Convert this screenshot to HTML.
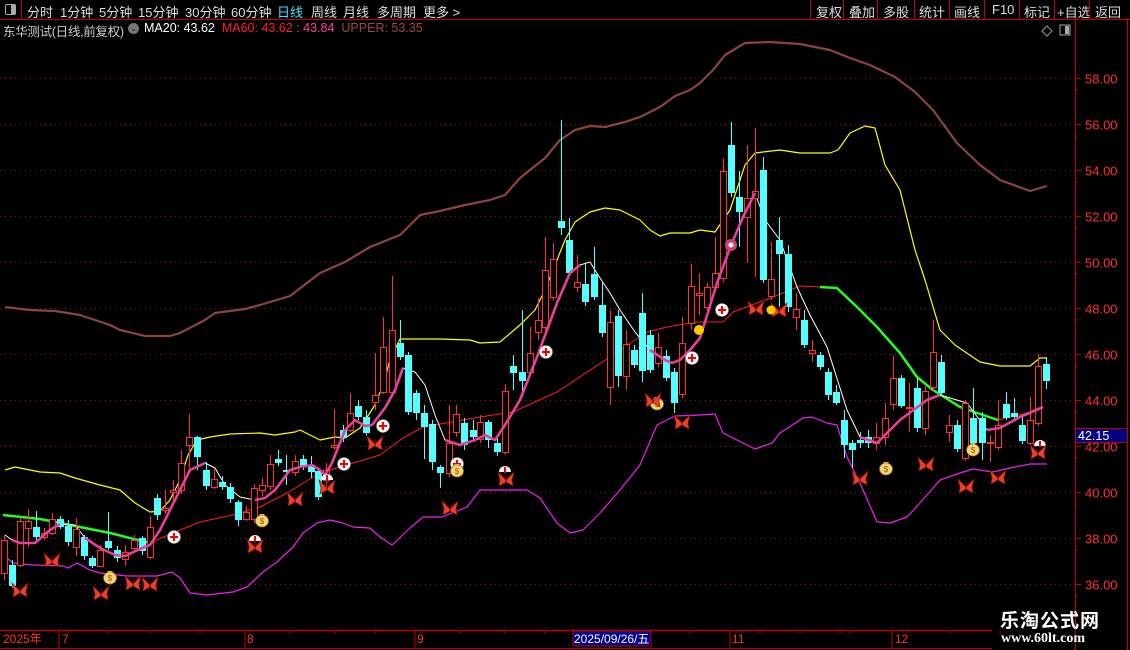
<!DOCTYPE html>
<html><head><meta charset="utf-8"><style>
html,body{margin:0;padding:0;background:#000;width:1130px;height:650px;overflow:hidden;font-family:"Liberation Sans","Noto Sans CJK SC",sans-serif}
#top{position:absolute;left:0;top:0;width:1130px;height:19px;border-bottom:1px solid #c00000}
.t{position:absolute;top:2px;font-size:13px;color:#ddd;white-space:nowrap}
.sep{position:absolute;top:0;width:1px;height:19px;background:#c00000}
svg{position:absolute;left:0;top:0}
</style></head><body>
<div id="top">
<div style="position:absolute;left:0;top:0;width:21px;height:19px;border-right:1px solid #c00000"></div>
<div style="position:absolute;left:5px;top:4px;width:9px;height:9px;border:1px solid #aaa;border-radius:2px"><div style="position:absolute;right:0;top:0;width:4px;height:9px;background:#aaa"></div></div>
<span class="t" style="left:27px">分时</span>
<span class="t" style="left:60px">1分钟</span>
<span class="t" style="left:99px">5分钟</span>
<span class="t" style="left:138px">15分钟</span>
<span class="t" style="left:185px">30分钟</span>
<span class="t" style="left:231px">60分钟</span>
<span class="t" style="left:277px;color:#40e0ff">日线</span>
<span class="t" style="left:311px">周线</span>
<span class="t" style="left:343px">月线</span>
<span class="t" style="left:377px">多周期</span>
<span class="t" style="left:423px">更多 &gt;</span>
<div class="sep" style="left:810px"></div><span class="t" style="left:816px">复权</span>
<div class="sep" style="left:843px"></div><span class="t" style="left:849px">叠加</span>
<div class="sep" style="left:877px"></div><span class="t" style="left:883px">多股</span>
<div class="sep" style="left:914px"></div><span class="t" style="left:919px">统计</span>
<div class="sep" style="left:949px"></div><span class="t" style="left:954px">画线</span>
<div class="sep" style="left:984px"></div><span class="t" style="left:992px">F10</span>
<div class="sep" style="left:1019px"></div><span class="t" style="left:1024px">标记</span>
<div class="sep" style="left:1054px"></div><span class="t" style="left:1057px">+自选</span>
<div class="sep" style="left:1089px"></div><span class="t" style="left:1095px">返回</span>
</div>
<div style="position:absolute;left:3px;top:21px;font-size:12.5px;color:#ccc;white-space:nowrap;letter-spacing:-0.3px">东华测试(日线,前复权)</div>
<div style="position:absolute;left:128px;top:23px;width:11px;height:11px;border-radius:50%;background:#777;color:#222;font-size:8px;text-align:center;line-height:11px">⌄</div>
<div style="position:absolute;left:144px;top:21px;font-size:12.5px;white-space:nowrap"><span style="color:#fff">MA20: 43.62</span>&nbsp; <span style="color:#ff2020">MA60: 43.62</span> <span style="color:#ff40a0">: 43.84</span>&nbsp; <span style="color:#a04545">UPPER: 53.35</span></div>
<svg id="s" width="1130" height="650" xmlns="http://www.w3.org/2000/svg"></svg>
<div style="position:absolute;left:1000px;top:606px;font-size:19px;font-weight:bold;color:#fff;font-family:'Noto Sans CJK SC',sans-serif;letter-spacing:1px">乐淘公式网</div>
<div style="position:absolute;left:1001px;top:631px;font-size:14px;font-weight:bold;color:#fff;font-family:'Liberation Serif',serif">www.60lt.com</div>
<script>
var S='';
function L(p,c,w,extra){S+='<polyline fill="none" stroke="'+c+'" stroke-width="'+w+'" stroke-linejoin="round" points="'+p.map(function(a){return a.join(',')}).join(' ')+'" '+(extra||'')+'/>';}
for(var v=36;v<=58;v+=2){var y=78.5+(58-v)*23;S+='<line x1="0" x2="1075" y1="'+y+'" y2="'+y+'" stroke="#8a1a1a" stroke-dasharray="1 4"/>';
S+='<line x1="1075" x2="1081" y1="'+y+'" y2="'+y+'" stroke="#c00000"/><line x1="1075" x2="1078" y1="'+(y+11.5)+'" y2="'+(y+11.5)+'" stroke="#c00000"/>';
S+='<text x="1085" y="'+(y+5)+'" fill="#ff3030" font-size="13" font-family="Liberation Sans">'+v.toFixed(2)+'</text>';}
S+='<line x1="1075.5" x2="1075.5" y1="20" y2="650" stroke="#c00000"/><line x1="1127.5" x2="1127.5" y1="20" y2="650" stroke="#c00000"/>';
S+='<path d="M1047 26l5 5-5 5-5-5z" fill="none" stroke="#999"/><rect x="1060" y="25" width="10" height="10" fill="none" stroke="#aaa"/><rect x="1065" y="26" width="4" height="8" fill="#aaa"/>';
L([[5,307],[30,310],[55,311],[80,315],[110,325],[120,330],[145,336],[170,336],[180,333],[205,320],[215,313],[245,309],[260,305],[290,296],[320,273],[345,262],[370,247],[400,235],[420,215],[440,211],[465,205],[490,200],[505,195],[520,178],[545,158],[560,140],[575,130],[590,126],[605,127],[625,122],[640,117],[660,107],[675,96],[690,90],[700,83],[713,70],[725,55],[745,43],[770,42],[800,44],[830,50],[850,58],[870,65],[895,77],[915,92],[933,110],[957,143],[980,165],[1000,180],[1030,191],[1047,186]],'#8b4540',2.2);
L([[5,470],[15,467],[40,472],[60,473],[75,478],[100,485],[120,490],[135,503],[150,512],[160,511],[170,500],[180,480],[188,455],[197,440],[210,437],[230,434],[260,433],[275,435],[295,432],[300,430],[320,440],[335,437],[345,438],[360,428],[375,405],[383,385],[390,360],[400,339],[420,339],[440,339],[470,340],[480,343],[500,342],[520,325],[535,310],[545,290],[555,265],[565,240],[575,222],[590,212],[605,208],[620,210],[640,220],[650,230],[660,236],[670,233],[690,233],[700,230],[715,232],[730,210],[745,165],[755,153],[780,150],[800,153],[830,153],[838,150],[850,133],[865,126],[875,128],[885,165],[900,190],[915,250],[925,280],[940,330],[955,345],[980,362],[1000,366],[1030,366],[1040,358],[1046,358]],'#ffff00',1.2);
L([[3,555],[13,563],[33,565],[63,566],[68,568],[77,563],[90,570],[100,573],[127,576],[157,576],[172,572],[180,578],[190,593],[207,595],[233,592],[247,587],[263,572],[277,562],[293,547],[303,533],[317,523],[330,520],[343,523],[353,527],[370,528],[380,537],[392,545],[410,528],[423,517],[442,517],[467,507],[480,490],[497,490],[527,490],[540,498],[557,523],[570,533],[583,530],[600,513],[620,490],[640,465],[657,425],[675,416],[700,415],[715,414],[723,433],[755,449],[772,443],[780,433],[803,418],[812,417],[827,423],[837,425],[847,457],[860,483],[877,522],[890,523],[907,517],[920,503],[940,480],[960,473],[973,469],[993,472],[1010,468],[1030,464],[1047,464]],'#ee20ee',1.2);
L([[150,543],[173,533],[200,522],[233,515],[260,507],[287,493],[320,473],[353,463],[380,455],[403,438],[423,427],[480,417],[513,412],[557,392],[610,357],[647,332],[667,327],[697,322],[723,322],[733,312],[773,297],[800,286],[820,287]],'#ff1a1a',1);
L([[998,420],[1027,413],[1043,408]],'#ff1a1a',1);
L([[3,515],[40,519],[80,527],[110,533],[150,543]],'#20ff20',2.5);
L([[820,287],[837,288],[857,307],[877,327],[900,353],[917,377],[933,390],[960,407],[977,413],[998,420]],'#20ff20',2.5);
var W=[[5,535],[12,540],[20,543],[35,543],[50,530],[60,524],[75,525],[85,538],[100,548],[115,555],[125,556],[140,549],[150,545],[160,530],[175,500],[190,470],[205,463],[215,468],[225,485],[240,497],[255,500],[265,498],[275,490],[290,470],[300,467],[312,465],[320,470],[325,475],[332,463],[345,430],[355,420],[365,426],[372,425],[385,408],[395,390],[403,368],[415,372],[425,385],[435,415],[445,440],[460,445],[475,440],[485,435],[495,440],[505,425],[520,400],[537,357],[557,303],[570,273],[580,265],[590,262],[600,278],[610,293],[620,310],[635,332],[650,350],[665,360],[672,363],[680,360],[690,350],[700,338],[717,283],[732,243],[743,217],[755,193],[765,220],[780,240],[797,287],[810,315],[827,347],[847,410],[860,437],[877,443],[900,420],[927,400],[940,395],[967,403],[987,430],[1000,428],[1020,417],[1043,407]];
L(W,'#ffffff',1);
var C=[[4,573,540,535,580],[12,565,586,560,588],[20,565,521,517,567],[28,528,521,509,547],[36,527,537,511,540],[44,537,533,528,540],[52,533,519,513,535],[60,519,527,516,529],[68,526,542,520,546],[76,547,529,518,556],[84,537,556,535,560],[92,558,566,556,568],[100,566,550,545,567],[108,541,548,512,550],[117,550,558,546,562],[125,559,552,545,566],[134,548,540,535,552],[142,538,551,536,555],[150,557,527,516,559],[157,498,515,494,520],[165,510,508,490,514],[173,492,490,480,500],[181,490,463,450,494],[189,445,437,414,470],[197,437,457,436,470],[206,470,486,462,490],[214,487,479,468,489],[222,482,487,476,490],[230,487,499,483,503],[238,502,520,500,526],[246,519,512,506,521],[254,519,488,484,523],[262,490,485,478,496],[270,486,464,455,490],[278,459,463,450,466],[286,470,472,455,485],[295,472,461,455,476],[303,459,467,455,470],[311,465,472,456,478],[318,471,497,468,500],[326,480,470,463,490],[334,447,445,409,450],[343,430,438,425,442],[350,430,413,393,432],[358,406,417,400,420],[366,417,433,410,436],[375,402,395,353,410],[383,392,347,317,394],[392,392,330,276,395],[400,343,357,320,360],[408,355,412,352,415],[416,393,413,390,420],[424,413,427,405,459],[432,424,462,420,470],[440,467,473,465,488],[449,473,443,405,477],[456,432,414,405,437],[464,423,445,418,450],[473,430,437,420,440],[480,439,422,415,443],[488,422,440,420,448],[497,443,452,438,456],[505,452,391,384,455],[513,366,373,355,390],[522,372,381,310,397],[530,372,353,327,375],[538,332,320,298,340],[545,327,270,237,330],[553,297,259,243,300],[561,221,228,120,235],[569,240,273,218,276],[577,287,282,255,292],[585,284,302,263,306],[594,274,297,247,300],[602,305,333,283,337],[610,387,322,310,405],[618,316,376,310,387],[626,376,344,330,390],[634,350,365,345,368],[642,313,371,293,382],[650,335,370,330,373],[658,363,347,333,367],[666,356,378,350,381],[674,372,403,368,413],[682,394,343,317,398],[691,323,286,264,330],[699,295,293,273,315],[707,307,287,283,312],[715,287,273,237,290],[723,278,171,158,282],[731,145,193,122,197],[739,197,212,171,247],[747,217,198,145,263],[755,198,191,128,277],[763,170,280,157,283],[771,296,279,242,300],[779,240,254,217,307],[788,254,307,245,312],[796,317,309,293,330],[804,320,345,310,348],[812,353,350,340,362],[820,355,367,352,370],[828,372,395,368,400],[836,392,403,385,405],[844,420,445,410,458],[852,443,450,440,468],[860,440,443,432,448],[868,437,443,430,448],[876,443,437,423,450],[885,437,418,403,445],[893,404,378,356,410],[901,378,406,375,408],[909,408,407,383,432],[917,388,428,378,432],[925,428,391,385,435],[933,387,352,320,392],[941,362,393,355,396],[949,432,425,415,442],[957,425,449,420,452],[965,458,403,400,461],[973,418,443,388,446],[982,418,443,412,460],[990,443,442,435,462],[998,447,425,400,450],[1006,404,418,392,420],[1014,413,417,398,420],[1022,425,441,415,444],[1030,443,420,397,445],[1038,423,366,354,426],[1046,364,381,357,389]];
C.forEach(function(c){var x=c[0],o=c[1],cl=c[2],h=c[3],l=c[4];var up=cl<o;var t=Math.min(o,cl),b=Math.max(o,cl);if(b-t<1)b=t+1;
if(up){S+='<line x1="'+(x+.5)+'" x2="'+(x+.5)+'" y1="'+h+'" y2="'+t+'" stroke="#ff3232"/><line x1="'+(x+.5)+'" x2="'+(x+.5)+'" y1="'+b+'" y2="'+l+'" stroke="#ff3232"/><rect x="'+(x-2.5)+'" y="'+(t+.5)+'" width="6" height="'+(b-t)+'" fill="#000" stroke="#ff3232"/>';}
else{S+='<line x1="'+(x+.5)+'" x2="'+(x+.5)+'" y1="'+h+'" y2="'+l+'" stroke="#54ffff"/><rect x="'+(x-3)+'" y="'+t+'" width="7" height="'+(b-t)+'" fill="#54ffff"/>';}});
function seg(a,b){L(W.filter(function(p){return p[0]>=a&&p[0]<=b}),'#e8409a',2.6);}
seg(12,60);seg(85,205);seg(255,403);seg(445,580);seg(650,755);seg(860,940);seg(985,1043);
function cross(x,y){S+='<circle cx="'+x+'" cy="'+y+'" r="6.5" fill="#f4f4f4" stroke="#999" stroke-width=".6"/><path d="M'+(x-4)+' '+y+'h8M'+x+' '+(y-4)+'v8" stroke="#e00" stroke-width="2"/>';}
function bf(x,y){S+='<path d="M'+x+' '+(y+1)+'L'+(x-8)+' '+(y-7)+'L'+(x-6)+' '+(y+1)+'L'+(x-7)+' '+(y+7)+'L'+x+' '+(y+3)+'L'+(x+7)+' '+(y+7)+'L'+(x+6)+' '+(y+1)+'L'+(x+8)+' '+(y-7)+'Z" fill="#e8422a" stroke="#901000" stroke-width=".7"/><path d="M'+x+' '+(y-4)+'v7" stroke="#700" stroke-width="1"/>';}
function bag(x,y){S+='<ellipse cx="'+x+'" cy="'+(y+1)+'" rx="6.5" ry="6" fill="#f2d676" stroke="#a07010" stroke-width=".7"/><path d="M'+(x-3)+' '+(y-6)+'h6l-2 2h-2z" fill="#e0b040"/><text x="'+x+'" y="'+(y+4)+'" font-size="8" text-anchor="middle" fill="#a05010" font-family="Liberation Sans">$</text>';}
function half(x,y){S+='<path d="M'+(x-6)+' '+y+'a6 6 0 0 1 12 0z" fill="#f4f4f4"/><path d="M'+x+' '+(y-5)+'v6" stroke="#e00" stroke-width="2"/>';}
[[174,537],[344,464],[383,426],[457,464],[546,352],[692,358],[722,310]].forEach(function(p){cross(p[0],p[1]);});
[[255,541],[505,472],[1040,446],[327,480]].forEach(function(p){half(p[0],p[1]);});
[[110,577],[262,520],[657,403],[886,468],[973,449],[457,470]].forEach(function(p){bag(p[0],p[1]);});
[[20,590],[52,560],[101,593],[133,583],[150,584],[255,546],[295,499],[327,487],[375,443],[450,508],[506,479],[653,400],[682,422],[756,308],[779,310],[860,478],[926,464],[966,486],[998,477],[1038,452]].forEach(function(p){bf(p[0],p[1]);});
S+='<circle cx="699" cy="330" r="5" fill="#ffcc00"/><circle cx="771" cy="310" r="4.5" fill="#ffcc00"/><circle cx="731" cy="245" r="6" fill="#d04070"/><circle cx="731" cy="245" r="2.5" fill="#fff"/>';
S+='<rect x="1075.5" y="428.5" width="52" height="14" fill="#000080" stroke="#c00000"/><text x="1078" y="440" fill="#fff" font-size="12.5" font-family="Liberation Sans">42.15</text>';
S+='<line x1="0" x2="992" y1="630.5" y2="630.5" stroke="#c00000" stroke-width="1.5"/><line x1="0" x2="992" y1="648.5" y2="648.5" stroke="#c00000"/>';
[59,245,415,730,892].forEach(function(x){S+='<line x1="'+x+'" x2="'+x+'" y1="631" y2="648" stroke="#c00000"/>';});
[107,150,200,290,335,375,460,505,545,612,690,760,800,840,850,950,1000].forEach(function(x){S+='<line x1="'+x+'" x2="'+x+'" y1="631" y2="634" stroke="#c00000"/>';});
function tt(x,s){S+='<text x="'+x+'" y="643" fill="#ff3030" font-size="12" font-family="Liberation Sans">'+s+'</text>';}
tt(3,'2025年');tt(62,'7');tt(247,'8');tt(417,'9');tt(732,'11');tt(895,'12');
S+='<rect x="573" y="631" width="78" height="15" fill="#00008a" stroke="#c00000"/><text x="574" y="643" fill="#fff" font-size="12" font-family="Liberation Sans, Noto Sans CJK SC">2025/09/26/五</text>';
document.getElementById('s').innerHTML=S;
</script>
</body></html>
